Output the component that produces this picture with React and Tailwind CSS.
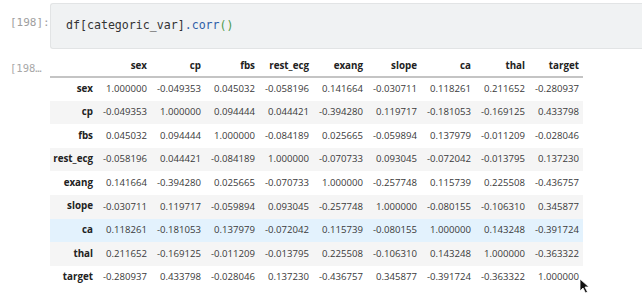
import React from 'react';

const cols = ['sex', 'cp', 'fbs', 'rest_ecg', 'exang', 'slope', 'ca', 'thal', 'target'];

const rows = [
  ['sex', '1.000000', '-0.049353', '0.045032', '-0.058196', '0.141664', '-0.030711', '0.118261', '0.211652', '-0.280937'],
  ['cp', '-0.049353', '1.000000', '0.094444', '0.044421', '-0.394280', '0.119717', '-0.181053', '-0.169125', '0.433798'],
  ['fbs', '0.045032', '0.094444', '1.000000', '-0.084189', '0.025665', '-0.059894', '0.137979', '-0.011209', '-0.028046'],
  ['rest_ecg', '-0.058196', '0.044421', '-0.084189', '1.000000', '-0.070733', '0.093045', '-0.072042', '-0.013795', '0.137230'],
  ['exang', '0.141664', '-0.394280', '0.025665', '-0.070733', '1.000000', '-0.257748', '0.115739', '0.225508', '-0.436757'],
  ['slope', '-0.030711', '0.119717', '-0.059894', '0.093045', '-0.257748', '1.000000', '-0.080155', '-0.106310', '0.345877'],
  ['ca', '0.118261', '-0.181053', '0.137979', '-0.072042', '0.115739', '-0.080155', '1.000000', '0.143248', '-0.391724'],
  ['thal', '0.211652', '-0.169125', '-0.011209', '-0.013795', '0.225508', '-0.106310', '0.143248', '1.000000', '-0.363322'],
  ['target', '-0.280937', '0.433798', '-0.028046', '0.137230', '-0.436757', '0.345877', '-0.391724', '-0.363322', '1.000000'],
];

const rowBg = (i) => {
  if (i === 6) return 'bg-[#e3f2fd]';
  return i % 2 === 1 ? 'bg-[#f5f5f5]' : 'bg-white';
};

const App = () => {
  return (
    <div className="relative w-[642px] h-[307px] overflow-hidden bg-white font-['Open_Sans',sans-serif]">
      {/* input cell */}
      <div className="flex pt-[3px]">
        <div className="w-[50px] pl-[10px] pt-[12px] text-[11px] text-[#9e9e9e] font-['DejaVu_Sans_Mono',monospace]">
          [198]:
        </div>
        <div className="flex-1 h-[46px] bg-[#f0f2f3] border border-[#e2e4e5] border-r-0 rounded-l-[3px] pl-[15px] flex items-center">
          <span className="font-['DejaVu_Sans_Mono',monospace] text-[11.6px] text-[#333]">
            df[categoric_var]<span className="text-[#2f5fa8]">.corr</span>
            <span className="text-[#4a9a4a]">()</span>
          </span>
        </div>
      </div>

      {/* output cell */}
      <div className="flex mt-[8px]">
        <div className="w-[50px] pl-[10px] pt-[4px] text-[10.5px] text-[#a8a8a8] font-['DejaVu_Sans_Mono',monospace]">
          [198…
        </div>
        <table className="w-[533px] border-collapse text-[9.6px] text-[#3a3a3a] table-fixed">
          <thead>
            <tr className="h-[20px] border-b-2 border-[#c4c4c4]">
              <th className="w-[47px]"></th>
              {cols.map((c) => (
                <th key={c} className="w-[54px] text-right pr-[4px] text-[9.8px] font-bold text-[#222]">
                  {c}
                </th>
              ))}
            </tr>
          </thead>
          <tbody>
            {rows.map((r, i) => (
              <tr key={r[0]} className={`h-[23.6px] ${rowBg(i)}`}>
                <th className="text-right pr-[4px] text-[9.8px] font-bold text-[#222] whitespace-nowrap">{r[0]}</th>
                {r.slice(1).map((v, j) => (
                  <td key={j} className="text-right pr-[4px] whitespace-nowrap">
                    {v}
                  </td>
                ))}
              </tr>
            ))}
          </tbody>
        </table>
      </div>

      {/* partial buttons at bottom */}
      <div className="flex gap-[22px] pl-[60px] mt-[19px]">
        <div className="w-[58px] h-[12px] border border-[#e0e0e0] rounded-[4px]"></div>
        <div className="w-[88px] h-[12px] border border-[#e0e0e0] rounded-[4px]"></div>
      </div>

      {/* mouse cursor */}
      <svg className="absolute left-[579px] top-[278px]" width="12" height="16" viewBox="0 0 12 16">
        <path d="M1 1 L1 13 L4 10 L6.5 15 L8.5 14 L6 9 L10 9 Z" fill="#111" stroke="#fff" strokeWidth="0.8" />
      </svg>
    </div>
  );
};

export default App;
